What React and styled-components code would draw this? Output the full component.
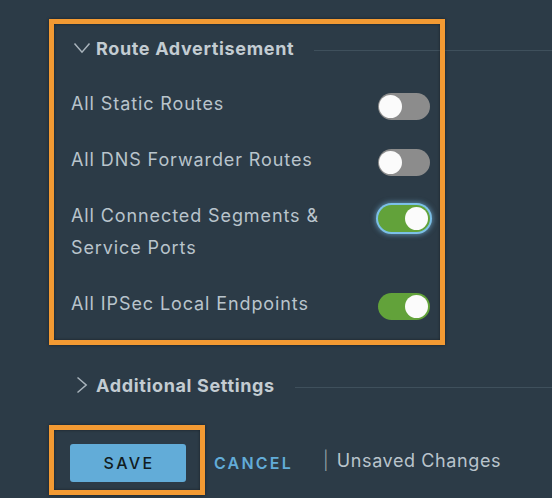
import React from "react";
import styled, { createGlobalStyle } from "styled-components";

const COLORS = {
  page: "#2c3b47",
  text: "#b9c4cc",
  heading: "#c3ccd2",
  rule: "#3f505c",
  orange: "#f39a33",
  blue: "#62acd8",
  green: "#62a23a",
  off: "#8c8c8c",
};

const GlobalStyles = createGlobalStyle`
  html, body {
    margin: 0;
    padding: 0;
    background: ${COLORS.page};
  }
  body {
    font-family: Inter, "Open Sans", "Liberation Sans", sans-serif;
    color: ${COLORS.text};
  }
`;

const routes = [
  { id: "static", label: "All Static Routes", on: false },
  { id: "dns", label: "All DNS Forwarder Routes", on: false },
  { id: "connected", label: "All Connected Segments & Service Ports", on: true, focused: true },
  { id: "ipsec", label: "All IPSec Local Endpoints", on: true },
];

const ChevronDown = () => (
  <svg width="18" height="12" viewBox="0 0 18 12" fill="none">
    <polyline points="1.5,1.5 9,10.2 16.5,1.5" stroke="#a9b4bc" strokeWidth="1.5" />
  </svg>
);

const ChevronRight = () => (
  <svg width="12" height="18" viewBox="0 0 12 18" fill="none">
    <polyline points="1.5,1.5 10.2,9 1.5,16.5" stroke="#a9b4bc" strokeWidth="1.5" />
  </svg>
);

const Toggle = ({ on, focused }) => (
  <Track $on={on} $focused={focused}>
    <Knob $on={on} />
  </Track>
);

const App = () => {
  return (
    <Page>
      <Section>
        <Highlight />
        <SectionHeader>
          <IconSlot>
            <ChevronDown />
          </IconSlot>
          <HeaderTitle>Route Advertisement</HeaderTitle>
          <Rule />
        </SectionHeader>
        <RouteList>
          {routes.map((r) => (
            <RouteRow key={r.id}>
              <RouteLabel>{r.label}</RouteLabel>
              <Toggle on={r.on} focused={r.focused} />
            </RouteRow>
          ))}
        </RouteList>
      </Section>

      <CollapsedHeader>
        <IconSlot>
          <ChevronRight />
        </IconSlot>
        <HeaderTitle>Additional Settings</HeaderTitle>
        <Rule />
      </CollapsedHeader>

      <Footer>
        <SaveFrame>
          <SaveButton>SAVE</SaveButton>
        </SaveFrame>
        <CancelButton>CANCEL</CancelButton>
        <Status>
          <Pipe>|</Pipe> Unsaved Changes
        </Status>
      </Footer>
      <GlobalStyles />
    </Page>
  );
};

const Page = styled.div`
  width: 552px;
  height: 498px;
  overflow: hidden;
  padding: 19px 0 0 49px;
  box-sizing: border-box;
`;

const Section = styled.section`
  position: relative;
  padding: 13px 0 25px;
`;

const Highlight = styled.div`
  position: absolute;
  top: 0;
  left: 0;
  bottom: 0;
  width: 396px;
  box-sizing: border-box;
  border: 5px solid ${COLORS.orange};
  box-shadow: 0 0 3px rgba(0, 0, 0, 0.45), inset 0 0 3px rgba(0, 0, 0, 0.45);
  z-index: 2;
  pointer-events: none;
`;

const SectionHeader = styled.div`
  display: flex;
  align-items: center;
  height: 32px;
  padding-left: 22px;
`;

const CollapsedHeader = styled(SectionHeader)`
  margin-top: 24px;
`;

const IconSlot = styled.span`
  display: flex;
  align-items: center;
  justify-content: center;
  width: 22px;
  height: 22px;
  margin-right: 3px;
`;

const HeaderTitle = styled.h3`
  margin: 0;
  font-size: 18px;
  font-weight: 700;
  letter-spacing: 0.65px;
  color: ${COLORS.heading};
  white-space: nowrap;
`;

const Rule = styled.div`
  flex: 1;
  height: 1px;
  margin: 4px 0 0 20px;
  background: ${COLORS.rule};
`;

const RouteList = styled.div`
  display: flex;
  flex-direction: column;
  gap: 24px;
  width: 359px;
  margin-top: 24px;
  padding-left: 22px;
`;

const RouteRow = styled.div`
  display: flex;
  align-items: flex-start;
  justify-content: space-between;
`;

const RouteLabel = styled.span`
  width: 262px;
  font-size: 18px;
  line-height: 32px;
  letter-spacing: 0.9px;
  color: ${COLORS.text};
`;

const Track = styled.span`
  position: relative;
  flex: none;
  width: 52px;
  height: 27px;
  margin-top: 5px;
  border-radius: 14px;
  background: ${(p) => (p.$on ? COLORS.green : COLORS.off)};
  box-shadow: ${(p) =>
    p.$focused ? "0 0 0 2px #7cc0e8, 0 0 5px 3px rgba(124,192,232,0.55)" : "none"};
`;

const Knob = styled.span`
  position: absolute;
  top: 2px;
  left: ${(p) => (p.$on ? "27px" : "1px")};
  width: 23px;
  height: 23px;
  border-radius: 50%;
  background: #fbfbfb;
`;

const Footer = styled.div`
  display: flex;
  align-items: center;
  margin-top: 24px;
`;

const SaveFrame = styled.div`
  padding: 14px 14px 8px 16px;
  border: 5px solid ${COLORS.orange};
  box-shadow: 0 0 3px rgba(0, 0, 0, 0.45), inset 0 0 3px rgba(0, 0, 0, 0.45);
`;

const SaveButton = styled.button`
  display: block;
  width: 116px;
  height: 38px;
  border: none;
  border-radius: 3px;
  background: ${COLORS.blue};
  color: #111c22;
  font-family: inherit;
  font-size: 16px;
  font-weight: 500;
  letter-spacing: 2.4px;
  padding: 0 0 0 2px;
`;

const CancelButton = styled.button`
  margin: 6px 0 0 9px;
  border: none;
  background: none;
  padding: 0;
  color: ${COLORS.blue};
  font-family: inherit;
  font-size: 16px;
  font-weight: 600;
  letter-spacing: 2.2px;
`;

const Status = styled.span`
  margin-left: 30px;
  font-size: 18px;
  letter-spacing: 0.6px;
  color: ${COLORS.text};
`;

const Pipe = styled.span`
  margin-right: 2px;
  color: #9aa6ae;
  font-weight: 300;
`;

export default App;
